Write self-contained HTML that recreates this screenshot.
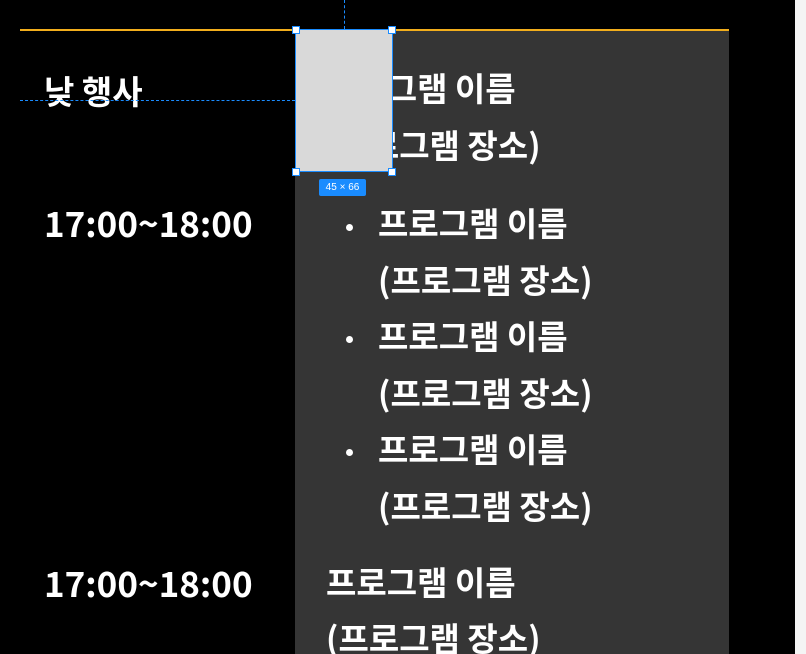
<!DOCTYPE html>
<html><head><meta charset="utf-8"><style>
html,body{margin:0;padding:0;background:#000;width:806px;height:654px;overflow:hidden;position:relative}
.t{position:absolute;color:#fff;font-family:"Liberation Sans","Noto Sans CJK KR",sans-serif;font-weight:700;white-space:nowrap;line-height:1}
.k{font-size:33px;font-family:"Noto Sans CJK KR","Liberation Sans",sans-serif}
.n{font-size:35px;font-family:"Noto Sans CJK KR","Liberation Sans",sans-serif}
.b{position:absolute;width:7px;height:7px;border-radius:50%;background:#fff}
</style></head><body>
<div style="position:absolute;left:795px;top:0;width:11px;height:654px;background:#f4f4f4"></div>
<div style="position:absolute;left:20px;top:29px;width:709px;height:2px;background:#f2ae1c"></div>
<div style="position:absolute;left:295px;top:31px;width:434px;height:623px;background:#353535"></div>

<div class="t k" style="left:44px;top:74px">낮 행사</div>
<div class="t k" style="left:326px;top:71px">프로그램 이름</div>
<div class="t k" style="left:326px;top:128px">(프로그램 장소)</div>

<div class="t n" style="left:44px;top:205px">17:00~18:00</div>
<div class="b" style="left:346px;top:224px"></div>
<div class="t k" style="left:378px;top:206px">프로그램 이름</div>
<div class="t k" style="left:378px;top:263px">(프로그램 장소)</div>
<div class="b" style="left:346px;top:336px"></div>
<div class="t k" style="left:378px;top:319px">프로그램 이름</div>
<div class="t k" style="left:378px;top:376px">(프로그램 장소)</div>
<div class="b" style="left:346px;top:449px"></div>
<div class="t k" style="left:378px;top:432px">프로그램 이름</div>
<div class="t k" style="left:378px;top:489px">(프로그램 장소)</div>

<div class="t n" style="left:44px;top:565px">17:00~18:00</div>
<div class="t k" style="left:326px;top:565px">프로그램 이름</div>
<div class="t k" style="left:326px;top:621px">(프로그램 장소)</div>

<div style="position:absolute;left:344px;top:0;height:29px;border-left:1px dashed #1a8cff"></div>
<div style="position:absolute;left:20px;top:100px;width:275px;border-top:1px dashed #1a8cff"></div>
<div style="position:absolute;left:295px;top:29px;width:96px;height:141px;background:#d9d9d9;border:1.5px solid #1a8cff"></div>
<div style="position:absolute;left:292px;top:26px;width:6px;height:6px;background:#fff;border:1px solid #1a8cff"></div>
<div style="position:absolute;left:388px;top:26px;width:6px;height:6px;background:#fff;border:1px solid #1a8cff"></div>
<div style="position:absolute;left:292px;top:168px;width:6px;height:6px;background:#fff;border:1px solid #1a8cff"></div>
<div style="position:absolute;left:388px;top:168px;width:6px;height:6px;background:#fff;border:1px solid #1a8cff"></div>
<div style="position:absolute;left:319px;top:179px;width:47px;height:17px;background:#1a8cff;border-radius:2px;color:#fff;font:10px/17px 'Liberation Sans',sans-serif;text-align:center">45 × 66</div>
</body></html>
